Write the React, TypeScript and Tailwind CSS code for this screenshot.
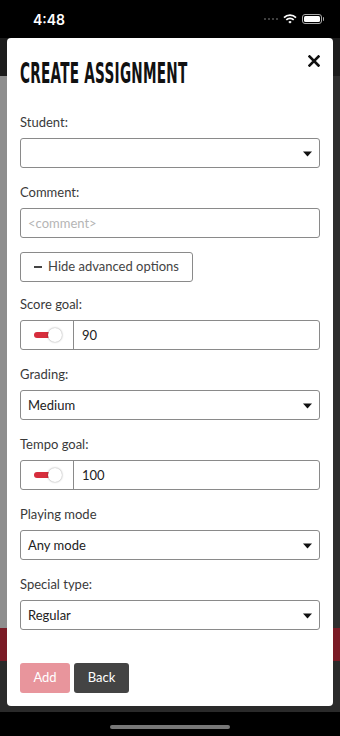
const bodyFont = "font-['Lato','Noto_Sans',sans-serif]";

function Label({ text }: { text: string }) {
  return <div className="h-4 text-[13px] leading-4 text-[#3a3a3a]">{text}</div>;
}

function Caret() {
  return (
    <svg width="9" height="6" viewBox="0 0 9 6" className="absolute right-[7px] top-[12px]">
      <path d="M0 0.5h9L4.5 5.5z" fill="#111" />
    </svg>
  );
}

function SelectBox({ value }: { value: string }) {
  return (
    <div className="relative mt-2 h-[30px] w-[300px] rounded-[3px] border border-[#8a8a8a] bg-white pl-[7px] text-[13px] leading-[28px] text-[#222]">
      {value}
      <Caret />
    </div>
  );
}

function ToggleInput({ value }: { value: string }) {
  return (
    <div className="mt-2 flex h-[30px] w-[300px] rounded-[3px] border border-[#8a8a8a] bg-white">
      <div className="flex w-[53px] items-center border-r border-[#8a8a8a] pl-[13px]">
        <div className="relative h-[6px] w-[20px] rounded-full bg-[#d62d3c]">
          <div className="absolute -right-[8px] -top-[4px] h-[14px] w-[14px] rounded-full bg-white shadow-[0_0_2px_rgba(0,0,0,0.45)]" />
        </div>
      </div>
      <div className="pl-[8px] text-[13px] leading-[28px] text-[#222]">{value}</div>
    </div>
  );
}

export default function App() {
  return (
    <div className={`relative h-[736px] w-[340px] overflow-hidden bg-black ${bodyFont}`}>
      {/* page behind the dialog */}
      <div className="absolute left-0 top-[38px] h-[38px] w-full bg-[#1c1c1c]" />
      <div className="absolute left-0 top-[76px] h-[552px] w-[170px] bg-[#8e8e8e]" />
      <div className="absolute left-[170px] top-[76px] h-[552px] w-[170px] bg-[#2e2e2e]" />
      <div className="absolute left-0 top-[628px] h-[33px] w-full bg-[#7a1b25]" />
      <div className="absolute left-0 top-[661px] h-[51px] w-full bg-[#2a2a2a]" />

      {/* status bar */}
      <div className="absolute left-0 top-0 flex h-[38px] w-full items-center justify-between pl-[33px] pr-[16px]">
        <span className="font-['Inter',sans-serif] text-[14px] font-semibold text-white">4:48</span>
        <div className="flex items-center gap-[5px]">
          <div className="flex items-end gap-[2px]">
            <span className="h-[2px] w-[2px] rounded-full bg-[#555]" />
            <span className="h-[2px] w-[2px] rounded-full bg-[#555]" />
            <span className="h-[2px] w-[2px] rounded-full bg-[#555]" />
            <span className="h-[2px] w-[2px] rounded-full bg-[#555]" />
          </div>
          <svg width="14" height="10" viewBox="0 0 14 10">
            <path d="M1 3.6a8.5 8.5 0 0 1 12 0" stroke="#fff" strokeWidth="1.7" fill="none" />
            <path d="M3.3 5.9a5.2 5.2 0 0 1 7.4 0" stroke="#fff" strokeWidth="1.7" fill="none" />
            <path d="M7 9.6L5.3 7.9a2.4 2.4 0 0 1 3.4 0z" fill="#fff" />
          </svg>
          <div className="flex items-center">
            <div className="h-[10px] w-[20px] rounded-[3px] border border-[#aaa] p-[1px]">
              <div className="h-full w-full rounded-[1.5px] bg-white" />
            </div>
            <div className="ml-[1px] h-[4px] w-[1.5px] rounded-r bg-[#aaa]" />
          </div>
        </div>
      </div>

      {/* dialog */}
      <div className="absolute left-[7px] top-[38px] h-[668px] w-[326px] rounded-[4px] bg-white px-[13px]">
        <svg width="12" height="12" viewBox="0 0 12 12" className="absolute right-[13px] top-[17px]">
          <path d="M1.5 1.5l9 9M10.5 1.5l-9 9" stroke="#111" strokeWidth="2.6" strokeLinecap="square" />
        </svg>
        <div className="pt-[20px]">
          <h1 className="origin-left scale-x-[0.54] whitespace-nowrap font-['DejaVu_Sans_Condensed','DejaVu_Sans',sans-serif] text-[28px] font-bold leading-[32px] tracking-[0.5px] text-[#111]">
            CREATE ASSIGNMENT
          </h1>
        </div>

        <div className="mt-[24px]">
          <Label text="Student:" />
          <SelectBox value="" />
        </div>

        <div className="mt-[16px]">
          <Label text="Comment:" />
          <div className="mt-2 h-[30px] w-[300px] rounded-[3px] border border-[#8a8a8a] pl-[7px] text-[13px] leading-[28px] text-[#b5b5b5]">
            &lt;comment&gt;
          </div>
        </div>

        <button className="mt-[14px] flex h-[30px] w-[173px] items-center justify-center gap-[6px] rounded-[3px] border border-[#8a8a8a] bg-white text-[13px] text-[#444]">
          <span className="h-[1.5px] w-[8px] bg-[#444]" />
          Hide advanced options
        </button>

        <div className="mt-[14px]">
          <Label text="Score goal:" />
          <ToggleInput value="90" />
        </div>

        <div className="mt-[16px]">
          <Label text="Grading:" />
          <SelectBox value="Medium" />
        </div>

        <div className="mt-[16px]">
          <Label text="Tempo goal:" />
          <ToggleInput value="100" />
        </div>

        <div className="mt-[16px]">
          <Label text="Playing mode" />
          <SelectBox value="Any mode" />
        </div>

        <div className="mt-[16px]">
          <Label text="Special type:" />
          <SelectBox value="Regular" />
        </div>

        <div className="mt-[33px] flex gap-[4px]">
          <button className="h-[30px] w-[50px] rounded-[3px] bg-[#e8959c] text-[13px] text-white">Add</button>
          <button className="h-[30px] w-[55px] rounded-[3px] bg-[#444] text-[13px] text-white">Back</button>
        </div>
      </div>

      {/* home indicator */}
      <div className="absolute left-[110px] top-[725px] h-[4px] w-[120px] rounded-full bg-[#777]" />
    </div>
  );
}
